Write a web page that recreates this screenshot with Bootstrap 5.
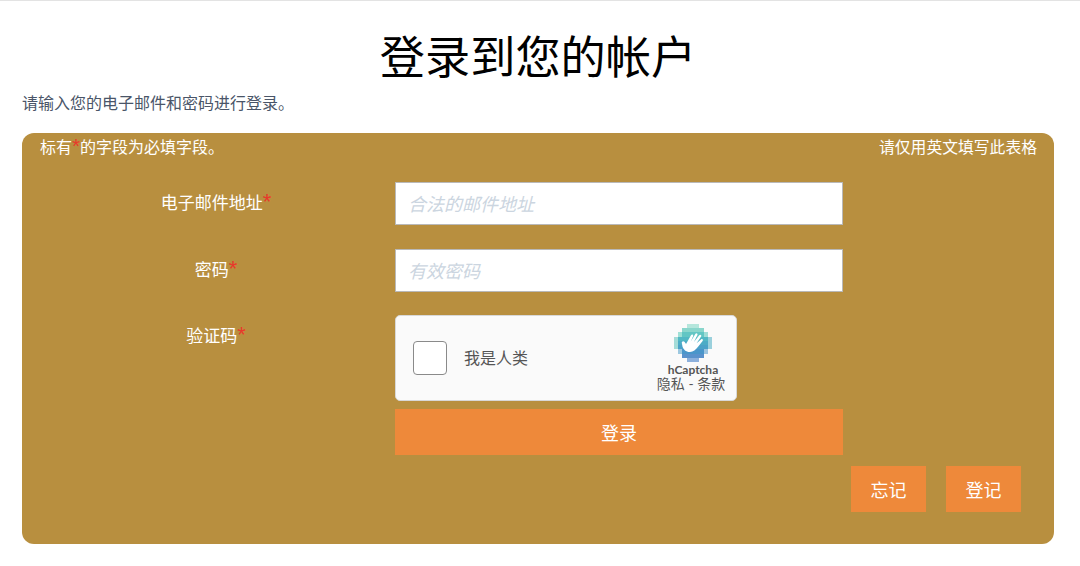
<!doctype html>
<html lang="zh">
<head>
<meta charset="utf-8">
<title>登录到您的帐户</title>
<link href="https://cdn.jsdelivr.net/npm/bootstrap@5.3.0/dist/css/bootstrap.min.css" rel="stylesheet">
<style>
html,body{height:566px;overflow:hidden}
body{font-family:Lato,"Noto Sans CJK SC",sans-serif;background:#fff;border-top:1px solid #e3e3e3;color:#4a5568}
.page-wrap{padding:0 26px 0 22px}
.page-title{font-size:45.2px;line-height:56px;font-weight:400;color:#000;text-align:center;margin:26px 0 0;font-family:"Noto Sans CJK SC",sans-serif}
.page-intro{font-size:16px;line-height:22px;margin:9px 0 0;color:#4a5568}
.form-panel{background:#b88f3f;border-radius:12px;height:411px;margin-top:19px;color:#fff;padding:4px 17px 0 18px}
.note-row{font-size:15.8px;line-height:20px}
.note-left{font-size:16px}
.req{color:#e8392b;font-family:"Liberation Sans",sans-serif;font-size:1.3em;line-height:0}
.field-row{display:flex;margin-left:-18px}
.field-label{width:373px;text-align:center;font-size:17px;line-height:24px;padding-left:15px;margin-top:9px}
.field-body{width:448px}
.text-field{height:43px;border-radius:0;border:1px solid #b9b9b9;font-size:18px;padding:0 13px 0 12px;font-style:italic;background:#fff}
.text-field::placeholder{color:#cbd5e0;opacity:1}
.captcha-box{width:342px;height:86px;background:#fafafa;border:1px solid #d8d8d8;border-radius:5px;color:#555;padding:0 8px 0 17px}
.captcha-check{width:34px;height:34px;border:1px solid #8a8a8a;border-radius:4px;background:#fff}
.captcha-text{font-size:16px;margin-left:17px}
.captcha-brand{width:70px;align-self:flex-start;margin-top:8px}
.captcha-name{font-size:12px;font-weight:700;line-height:12px;color:#555;margin-top:2px}
.captcha-links{font-size:14px;line-height:16px;color:#555;white-space:nowrap;padding-right:4px}
.action-btn{background:#ee893a;border:0;border-radius:0;color:#fff;font-size:18px;height:46px;padding:3px 0 0}
.action-btn:hover{background:#ee893a;color:#fff}
.small-btn{width:75px}
.row-one{margin-top:25px}
.row-two{margin-top:24px}
.row-three{margin-top:23px}
.submit-btn{margin-top:8px;width:448px}
.foot-row{margin-top:11px;gap:20px;padding-right:16px}
</style>
</head>
<body>
<div class="page-wrap">
  <h1 class="page-title">登录到您的帐户</h1>
  <p class="page-intro">请输入您的电子邮件和密码进行登录。</p>
  <form class="form-panel">
    <div class="d-flex justify-content-between note-row">
      <span class="note-left">标有<span class="req">*</span>的字段为必填字段。</span>
      <span>请仅用英文填写此表格</span>
    </div>
    <div class="field-row row-one">
      <label class="field-label">电子邮件地址<span class="req">*</span></label>
      <div class="field-body"><input class="form-control text-field" type="text" placeholder="合法的邮件地址"></div>
    </div>
    <div class="field-row row-two">
      <label class="field-label">密码<span class="req">*</span></label>
      <div class="field-body"><input class="form-control text-field" type="password" placeholder="有效密码"></div>
    </div>
    <div class="field-row row-three">
      <label class="field-label">验证码<span class="req">*</span></label>
      <div class="field-body">
        <div class="captcha-box d-flex align-items-center justify-content-between">
          <div class="d-flex align-items-center">
            <span class="captcha-check"></span>
            <span class="captcha-text">我是人类</span>
          </div>
          <div class="captcha-brand d-flex flex-column align-items-center">
            <svg width="38" height="38" viewBox="0 0 36 36" aria-hidden="true" shape-rendering="crispEdges">
              <rect x="12" y="0" width="12" height="4" fill="#b5e6dc"/>
              <rect x="8" y="4" width="20" height="4" fill="#8ad6cc"/>
              <rect x="4" y="8" width="28" height="4" fill="#62c6c4"/>
              <rect x="0" y="12" width="36" height="4" fill="#52b8c4"/>
              <rect x="0" y="16" width="36" height="4" fill="#4cacc6"/>
              <rect x="0" y="20" width="36" height="4" fill="#4ba2c8"/>
              <rect x="4" y="24" width="28" height="4" fill="#4a96ca"/>
              <rect x="8" y="28" width="20" height="4" fill="#5a92cc"/>
              <rect x="12" y="32" width="12" height="4" fill="#8cb0dc"/>
              <rect x="0" y="12" width="4" height="12" fill="#a5dcd8"/>
              <rect x="32" y="12" width="4" height="12" fill="#9ad0dc"/>
              <rect x="4" y="8" width="4" height="4" fill="#a0e0d6"/>
              <rect x="28" y="8" width="4" height="4" fill="#a0dcd6"/>
              <rect x="4" y="24" width="4" height="4" fill="#9cc8e0"/>
              <rect x="28" y="24" width="4" height="4" fill="#9cc4e0"/>
              <path shape-rendering="auto" fill="#fff" d="M7.500 18.500c-.8-1.800 1.300-3 2.400-1.600l1.500 2 4.700-8.200c.8-1.300 2.500-.5 2 .9l-2.200 5 4.300-7.200c.8-1.300 2.600-.5 2 1l-3.300 6.600 5-6.400c1-1.200 2.500-.1 1.800 1.200l-4.300 6.400 4.200-3.600c1.100-.9 2.400.3 1.500 1.500l-4.300 5.500c-2.300 3-4.600 5-7.900 4.900-3.800-.1-5.800-2.400-6.800-5z"/>
            </svg>
            <div class="captcha-name">hCaptcha</div>
            <div class="captcha-links">隐私 - 条款</div>
          </div>
        </div>
        <button type="button" class="btn action-btn submit-btn d-block">登录</button>
      </div>
    </div>
    <div class="d-flex justify-content-end foot-row">
      <button type="button" class="btn action-btn small-btn">忘记</button>
      <button type="button" class="btn action-btn small-btn">登记</button>
    </div>
  </form>
</div>
<script src="https://cdn.jsdelivr.net/npm/bootstrap@5.3.0/dist/js/bootstrap.bundle.min.js"></script>
</body>
</html>
